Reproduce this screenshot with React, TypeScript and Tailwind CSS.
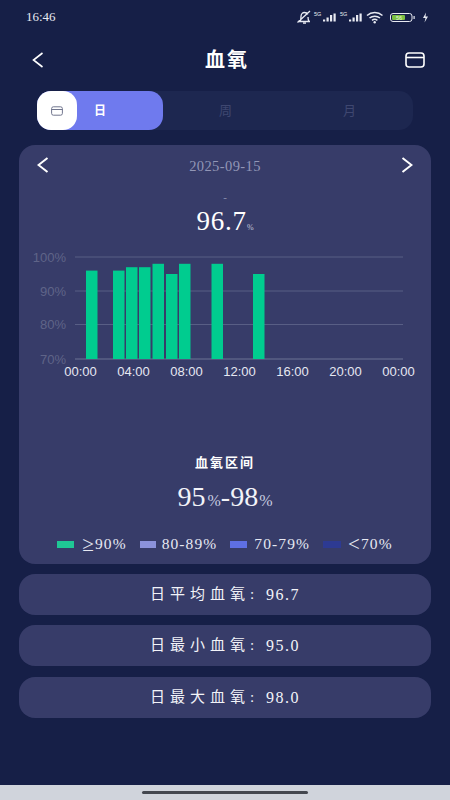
import React from 'react';

const serif = { fontFamily: '"Liberation Serif", "Noto Sans CJK SC", serif' };

const bars = [
  { x: 11, v: 96 },
  { x: 38, v: 96 },
  { x: 51, v: 97 },
  { x: 64, v: 97 },
  { x: 77.5, v: 98 },
  { x: 91, v: 95 },
  { x: 104, v: 98 },
  { x: 136.5, v: 98 },
  { x: 178, v: 95 },
];

const yLabels = [
  { label: '100%', y: 257 },
  { label: '90%', y: 291 },
  { label: '80%', y: 324.5 },
  { label: '70%', y: 359 },
];

const xLabels = ['00:00', '04:00', '08:00', '12:00', '16:00', '20:00', '00:00'];

const legend = [
  { sym: '≥', label: '90%', color: 'bg-[#1fc795]', w: 'w-[17px]', gap: 'gap-[8px]' },
  { sym: '', label: '80-89%', color: 'bg-[#8b92db]', w: 'w-[16px]', gap: 'gap-[6px]' },
  { sym: '', label: '70-79%', color: 'bg-[#5e6fe4]', w: 'w-[17px]', gap: 'gap-[7px]' },
  { sym: '<', label: '70%', color: 'bg-[#2d3a92]', w: 'w-[18px]', gap: 'gap-[7px]' },
];

const stats = [
  { label: '日平均血氧', value: '96.7', mt: 'mt-[10px]' },
  { label: '日最小血氧', value: '95.0', mt: 'mt-[10px]' },
  { label: '日最大血氧', value: '98.0', mt: 'mt-[11px]' },
];

function SignalBars({ x }: { x: number }) {
  return (
    <g fill="#e8eaf2">
      <text x={x} y="6.5" fontSize="5.5" fontFamily="Liberation Sans, sans-serif">5G</text>
      <rect x={x + 9} y="10.5" width="2.2" height="2" />
      <rect x={x + 12.5} y="8.5" width="2.2" height="4" />
      <rect x={x + 16} y="6" width="2.2" height="6.5" />
      <rect x={x + 19.5} y="4.5" width="2.2" height="8" />
    </g>
  );
}

function StatusIcons() {
  return (
    <svg width="134" height="16" viewBox="0 0 134 16" fill="none" className="block">
      {/* muted bell */}
      <path d="M1 12.500h12M3 12.500c1-1.500 1-3 1-5 0-2.500 1.500-4 3.500-4 1.500 0 2.700.7 3.200 2M11 8c0 1.800.3 3.200 1 4.500M0.500 13.500 13 2M6 14.200h3" stroke="#e8eaf2" strokeWidth="1.300" />
      <SignalBars x={17} />
      <SignalBars x={43} />
      {/* wifi */}
      <path d="M70 6.500c4.500-4 11-4 15.500 0M72.500 9c3-2.500 7.500-2.500 10.500 0M75 11.300c1.600-1.200 3.800-1.200 5.400 0" stroke="#e8eaf2" strokeWidth="1.500" />
      <circle cx="77.700" cy="13.300" r="1.200" fill="#e8eaf2" />
      {/* battery */}
      <rect x="93.500" y="4.500" width="21.500" height="8" rx="2.500" stroke="#e8eaf2" />
      <rect x="95" y="6" width="13" height="5" rx="1" fill="#7bc142" />
      <text x="102" y="10.800" fontSize="5.500" fill="#e8f5d8" textAnchor="middle" fontFamily="Liberation Sans, sans-serif">56</text>
      <rect x="116.500" y="7" width="1.200" height="3" fill="#e8eaf2" />
      {/* charging */}
      <path d="M129 3.500l-3 5.500h2.500l-1 4.500 3.500-6h-2.500z" fill="#e8eaf2" />
    </svg>
  );
}

function CardIcon({ className, color }: { className?: string; color: string }) {
  return (
    <svg viewBox="0 0 20 16" fill="none" className={className}>
      <rect x="1" y="1" width="18" height="14" rx="3" stroke={color} strokeWidth="1.600" />
      <path d="M1 5.500h18" stroke={color} strokeWidth="1.600" />
    </svg>
  );
}

function Chevron({ dir, width = 2 }: { dir: 'left' | 'right'; width?: number }) {
  return (
    <svg width="12" height="16" viewBox="0 0 12 16" fill="none" className="block">
      <path d={dir === 'left' ? 'M10.500 1 1.500 8l9 7' : 'M1.500 1l9 7-9 7'} stroke="#ffffff" strokeWidth={width} />
    </svg>
  );
}

function Chart() {
  // y coordinates are page based minus chart top (250), x are page based minus card left (19)
  const top = 250;
  const base = 359 - top;
  const yOf = (v: number) => base - ((v - 70) / 30) * (359 - 257);
  return (
    <svg width="412" height="132" viewBox="0 0 412 132" className="block">
      {yLabels.map((l) => (
        <g key={l.label}>
          <line x1="56" x2="384" y1={l.y - top} y2={l.y - top} stroke={l.label === '70%' ? '#6c7295' : '#585e85'} strokeWidth="1" />
          <text x="47" y={l.y - top + 4.500} textAnchor="end" fontSize="13" fill="#5f6488" fontFamily="Liberation Sans, sans-serif">
            {l.label}
          </text>
        </g>
      ))}
      {bars.map((b, i) => (
        <rect key={i} x={b.x + 56} y={yOf(b.v)} width="11.500" height={base - yOf(b.v)} fill="#00cc8f" />
      ))}
      {xLabels.map((l, i) => (
        <text
          key={i}
          x={61.500 + i * 53}
          y="126"
          textAnchor="middle"
          fontSize="13"
          fill="#e6e8f2"
          fontFamily="Liberation Sans, sans-serif"
        >
          {l}
        </text>
      ))}
    </svg>
  );
}

export default function App() {
  return (
    <div className="w-[450px] h-[800px] bg-[#161f47] flex flex-col overflow-hidden text-white" style={serif}>
      <div className="h-[33px] shrink-0 flex items-center justify-between pl-[26px] pr-[19px]">
        <span className="text-[13px] text-[#e8eaf2]">16:46</span>
        <StatusIcons />
      </div>

      <div className="h-[54px] shrink-0 flex items-center justify-between pl-[32px] pr-[25px] relative">
        <Chevron dir="left" width={1.600} />
        <span className="text-[20px] font-bold tracking-[2px] absolute left-[4px] right-0 text-center">血氧</span>
        <CardIcon className="w-[20px] h-[16px]" color="#ffffff" />
      </div>

      <div className="mt-[4px] mx-[37px] h-[39px] shrink-0 flex rounded-[14px] bg-[#1d2750]">
        <div className="w-[126px] flex rounded-[14px] bg-[#6f7aee]">
          <div className="w-[40px] flex items-center justify-center rounded-[14px] bg-white">
            <CardIcon className="w-[12px] h-[10px]" color="#6b7089" />
          </div>
          <div className="flex items-center pl-[17px] text-[12px] font-bold">日</div>
        </div>
        <div className="w-[125px] flex items-center justify-center text-[13px] text-[#3f4770]">周</div>
        <div className="w-[125px] flex items-center justify-center pr-[2px] text-[13px] text-[#3f4770]">月</div>
      </div>

      <div className="mt-[15px] mx-[19px] h-[419px] shrink-0 rounded-[16px] bg-[#373c69] flex flex-col items-center">
        <div className="w-full h-[40px] shrink-0 flex items-center justify-between px-[18px]">
          <Chevron dir="left" />
          <span className="text-[14.5px] leading-[22px] pt-[2px] text-[#9296b6] tracking-[0.4px]">2025-09-15</span>
          <Chevron dir="right" />
        </div>
        <div className="mt-[6px] h-[12px] leading-[12px] text-[11px] text-[#8f93b3]">-</div>
        <div className="mt-[3px] h-[30px] flex items-baseline">
          <span className="text-[27px] leading-[30px] tracking-[0.8px]">96.7</span>
          <span className="text-[8px] text-[#c4c7da]">%</span>
        </div>
        <div className="mt-[14px] w-full">
          <Chart />
        </div>
        <div className="mt-[72px] h-[18px] leading-[18px] text-[13px] font-bold tracking-[2px]">血氧区间</div>
        <div className="mt-[10px] h-[30px] flex items-baseline text-[#f2f3f8]">
          <span className="text-[28px] leading-[30px]">95</span>
          <span className="text-[16px] ml-[2px] text-[#c9cce0]">%</span>
          <span className="text-[28px] leading-[30px]">-98</span>
          <span className="text-[16px] ml-[1px] text-[#c9cce0]">%</span>
        </div>
        <div className="mt-[23px] flex items-center gap-[13px]">
          {legend.map((l) => (
            <div key={l.label} className={`flex items-center ${l.gap}`}>
              <span className={`h-[7px] ${l.w} ${l.color}`} />
              <div className="flex items-center text-[15.5px] leading-[18px] text-[#e6e8f2] tracking-[1.100px]">
                {l.sym && <span className="text-[21px] leading-[18px]">{l.sym}</span>}
                <span>{l.label}</span>
              </div>
            </div>
          ))}
        </div>
      </div>

      {stats.map((s) => (
        <div
          key={s.label}
          className={`${s.mt} mx-[19px] h-[41px] shrink-0 rounded-[16px] bg-[#373c69] flex items-center justify-center text-[15px] text-[#f2f3f8]`}
        >
          <span className="tracking-[5px]">{s.label}:</span>
          <span className="ml-[7px] text-[16px] tracking-[1.500px]">{s.value}</span>
        </div>
      ))}

      <div className="flex-1" />
      <div className="h-[15px] shrink-0 bg-[#d0d4dc] flex items-center justify-center">
        <div className="w-[166px] h-[3px] rounded-full bg-[#44474f]" />
      </div>
    </div>
  );
}
